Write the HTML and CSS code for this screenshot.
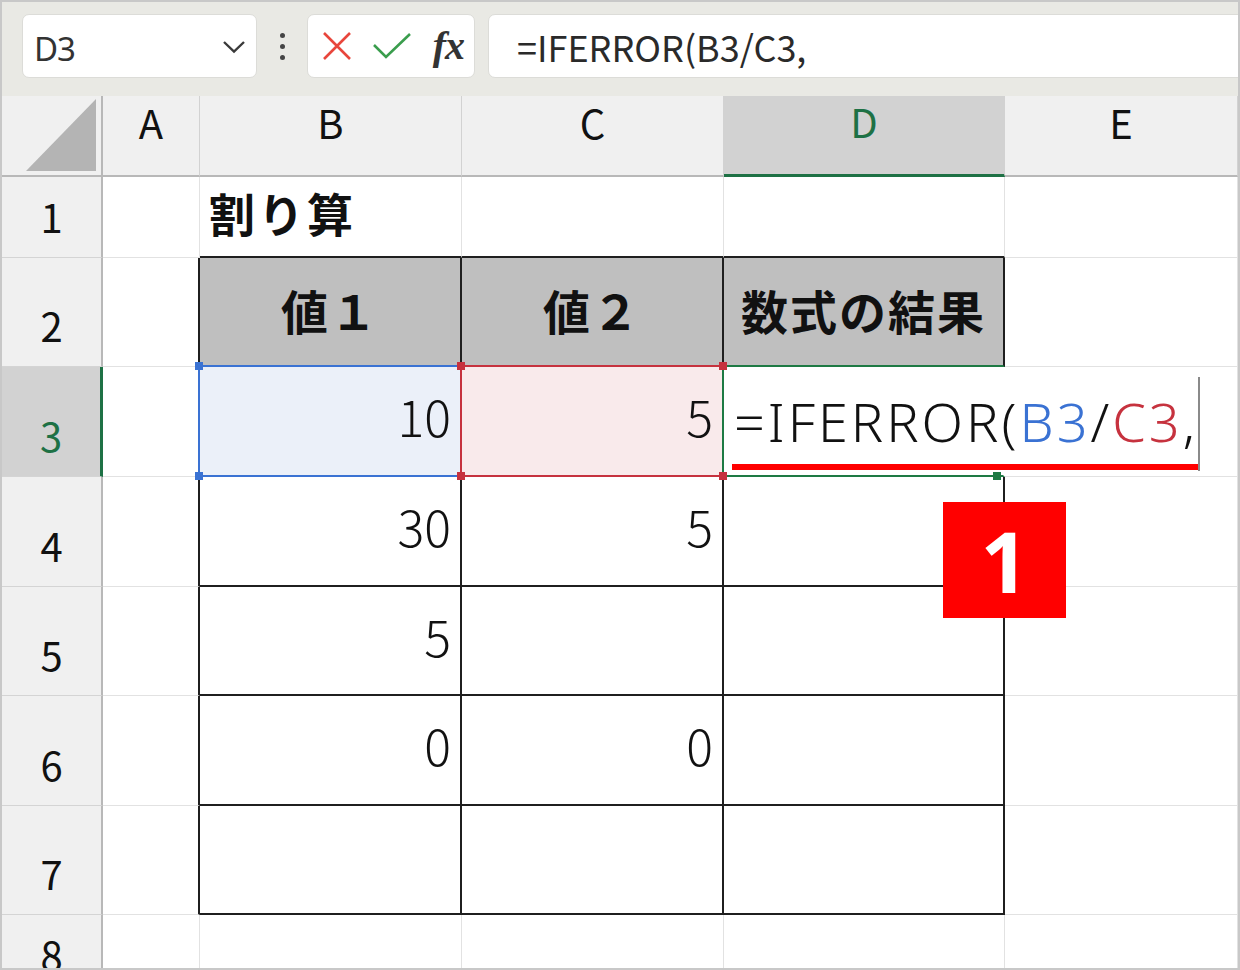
FILE: index.html
```html
<!DOCTYPE html>
<html lang="ja">
<head>
  <meta charset="UTF-8">
  <title>IFERROR 割り算</title>
  <link rel="stylesheet" href="styles.css">
</head>
<body>

  <div class="frame">
    <!-- formula bar -->
    <div class="toolbar">
      <div class="namebox">
        <span class="ref">D3</span>
        <svg class="chev" width="24" height="14" viewBox="0 0 24 14">
          <path d="M2 2 L12 11.5 L22 2" fill="none" stroke="#3a3a3a" stroke-width="2.4"/>
        </svg>
      </div>
      <div class="vdots"><i></i><i></i><i></i></div>
      <div class="fbtns">
        <svg width="30" height="30" viewBox="0 0 30 30">
          <path d="M2 2 L28 28 M28 2 L2 28" stroke="#e8463c" stroke-width="2.6" fill="none"/>
        </svg>
        <svg width="40" height="28" viewBox="0 0 40 28">
          <path d="M2 13 L14 25 L38 2" stroke="#3a9d4d" stroke-width="2.6" fill="none"/>
        </svg>
        <span class="fx">fx</span>
      </div>
      <div class="fbox">=IFERROR(B3/C3,</div>
    </div>

    <!-- sheet -->
    <div class="sheet">
      <div class="hd corner">
        <svg width="72" height="72" viewBox="0 0 72 72"><polygon points="70,0 70,72 0,72" fill="#b4b4b4"/></svg>
      </div>
      <div class="hd">A</div>
      <div class="hd">B</div>
      <div class="hd">C</div>
      <div class="hd hd-sel">D</div>
      <div class="hd">E</div>

      <div class="rh">1</div>
      <div class="c"></div>
      <div class="c tt title">割り算</div>
      <div class="c tt"></div>
      <div class="c tt"></div>
      <div class="c"></div>

      <div class="rh">2</div>
      <div class="c tl"></div>
      <div class="c tb th bb-blue">値１</div>
      <div class="c tb th bb-red">値２</div>
      <div class="c tb th bb-green">数式の結果</div>
      <div class="c"></div>

      <div class="rh rh-sel">3</div>
      <div class="c br-blue"></div>
      <div class="c num ref-b">10
        <span class="hdl blue tl-h"></span>
        <span class="hdl blue bl-h"></span>
      </div>
      <div class="c num ref-c">5
        <span class="hdl red tl-h"></span>
        <span class="hdl red bl-h"></span>
        <span class="hdl red tr-h"></span>
        <span class="hdl red br-h"></span>
      </div>
      <div class="c active">
        <div class="editor">
          <span class="etext">=IFERROR(<span class="k-b">B3</span>/<span class="k-c">C3</span>,</span>
          <div class="uline"></div>
        </div>
        <span class="hdl green fill-h"></span>
      </div>
      <div class="c"></div>

      <div class="rh">4</div>
      <div class="c tl"></div>
      <div class="c tb num">30</div>
      <div class="c tb num">5</div>
      <div class="c tb"></div>
      <div class="c"></div>

      <div class="rh">5</div>
      <div class="c tl"></div>
      <div class="c tb num">5</div>
      <div class="c tb num"></div>
      <div class="c tb"></div>
      <div class="c"></div>

      <div class="rh">6</div>
      <div class="c tl"></div>
      <div class="c tb num">0</div>
      <div class="c tb num">0</div>
      <div class="c tb"></div>
      <div class="c"></div>

      <div class="rh">7</div>
      <div class="c tl"></div>
      <div class="c tb"></div>
      <div class="c tb"></div>
      <div class="c tb"></div>
      <div class="c"></div>

      <div class="rh">8</div>
      <div class="c"></div>
      <div class="c"></div>
      <div class="c"></div>
      <div class="c"></div>
      <div class="c"></div>

      <div class="badge">1</div>
    </div>
  </div>

</body>
</html>
```

FILE: styles.css
```css
* {
  margin: 0;
  padding: 0;
  box-sizing: border-box;
}

body {
  background: #fff;
  font-family: "Noto Sans CJK JP", "Noto Sans", sans-serif;
  color: #111;
}

.frame {
  width: 1240px;
  height: 970px;
  border: 2px solid #c8c8c8;
  overflow: hidden;
  background: #fff;
}

/* formula bar */
.toolbar {
  height: 94px;
  background: #e9e9e4;
  display: flex;
  align-items: flex-start;
  padding: 12px 0 0 20px;
}

.namebox,
.fbtns,
.fbox {
  height: 64px;
  background: #fff;
  border: 1px solid #dcdcd8;
  border-radius: 7px;
  display: flex;
  align-items: center;
}

.namebox {
  width: 235px;
  padding: 0 10px 0 11px;
  justify-content: space-between;
}

.ref {
  font-family: "Noto Sans", sans-serif;
  font-size: 33px;
  color: #333;
  letter-spacing: -1px;
  margin-top: 4px;
}

.chev {
  margin-top: 2px;
}

.vdots {
  width: 50px;
  height: 64px;
  display: flex;
  flex-direction: column;
  align-items: center;
  justify-content: center;
  gap: 6px;
}

.vdots i {
  width: 5px;
  height: 5px;
  border-radius: 50%;
  background: #444;
}

.fbtns {
  width: 168px;
  padding: 0 10px 0 14px;
  justify-content: space-between;
}

.fx {
  font-family: "Liberation Serif", serif;
  font-style: italic;
  font-weight: bold;
  font-size: 40px;
  color: #333;
  letter-spacing: -1px;
  margin-top: -2px;
}

.fbox {
  flex: 1;
  margin-left: 13px;
  margin-right: -12px;
  padding-left: 28px;
  font-size: 36px;
  color: #2a2a2a;
}

/* sheet grid */
.sheet {
  position: relative;
  display: grid;
  grid-template-columns: 101px 97px 262px 262px 281px 1fr;
  grid-template-rows: 81px 81px 109px 110px 110px 109px 110px 109px 81px;
}

.hd {
  background: #f0f0f0;
  border-right: 1px solid #d2d2d2;
  border-bottom: 2px solid #b8b8b8;
  display: flex;
  justify-content: center;
  align-items: center;
  padding-bottom: 28px;
  font-size: 40px;
  color: #111;
}

.corner {
  border-right: 2px solid #b8b8b8;
  align-items: flex-end;
  justify-content: flex-end;
  padding: 0 3px 4px 0;
}

.hd-sel {
  background: #d2d2d2;
  color: #1e7145;
  border-bottom: 3px solid #1e7145;
}

.rh {
  background: #f0f0f0;
  border-right: 2px solid #b8b8b8;
  border-bottom: 1px solid #d4d4d4;
  display: flex;
  justify-content: center;
  align-items: flex-end;
  padding-bottom: 21px;
  font-size: 40px;
  line-height: 1;
}

.rh-sel {
  background: #d2d2d2;
  color: #1e7145;
  border-right: 3px solid #1e7145;
}

.c {
  position: relative;
  border-right: 1px solid #e2e2e2;
  border-bottom: 1px solid #e2e2e2;
  display: flex;
  align-items: center;
  font-size: 50px;
  font-weight: 300;
}

/* table borders */
.tb {
  border-right: 2px solid #1f1f1f;
  border-bottom: 2px solid #1f1f1f;
}

.tl {
  border-right: 2px solid #1f1f1f;
}

.tt {
  border-bottom: 2px solid #1f1f1f;
}

.title {
  font-size: 46px;
  font-weight: bold;
  letter-spacing: 3px;
  padding-left: 9px;
  padding-bottom: 10px;
}

.th {
  background: #bfbfbf;
  justify-content: center;
  font-size: 47px;
  font-weight: bold;
  letter-spacing: 2px;
  padding-bottom: 4px;
}

.num {
  justify-content: flex-end;
  padding-right: 9px;
  padding-bottom: 12px;
}

/* reference highlight */
.bb-blue { border-bottom: 2px solid #3a72d3; }
.bb-red { border-bottom: 2px solid #c6323e; }
.bb-green { border-bottom: 2px solid #1e7a44; }
.br-blue { border-right: 2px solid #3a72d3; }

.ref-b {
  background: #ebf0f9;
  border-bottom: 2px solid #3a72d3;
  border-right: 2px solid #c6323e;
}

.ref-c {
  background: #f9eaeb;
  border-bottom: 2px solid #c6323e;
  border-right: 2px solid #1e7a44;
}

.active {
  border-bottom: 2px solid #1e7a44;
  border-right: 2px solid #fff;
}

.hdl {
  position: absolute;
  width: 8px;
  height: 8px;
  z-index: 3;
}

.hdl.blue { background: #3a72d3; }
.hdl.red { background: #c6323e; }
.hdl.green { background: #1e7a44; }

.tl-h { left: -5px; top: -5px; }
.bl-h { left: -5px; bottom: -5px; }
.tr-h { right: -5px; top: -5px; }
.br-h { right: -5px; bottom: -5px; }
.fill-h { right: 2px; bottom: -5px; }

/* in-cell editor spilling into E3 */
.editor {
  position: absolute;
  left: 0;
  top: 10px;
  width: 476px;
  height: 94px;
  background: #fff;
  border-right: 2px solid #8a8a8a;
  z-index: 2;
  display: flex;
  flex-direction: column;
  padding-top: 12px;
}

.etext {
  font-family: "Noto Sans", sans-serif;
  font-size: 54px;
  font-weight: 300;
  letter-spacing: 3px;
  line-height: 64px;
  padding-left: 10px;
  color: #111;
  white-space: nowrap;
}

.k-b { color: #3a72d3; }
.k-c { color: #c6323e; }

.uline {
  margin: auto 0 1px 8px;
  height: 6px;
  background: #ff0000;
}

.badge {
  position: absolute;
  left: 941px;
  top: 406px;
  width: 123px;
  height: 116px;
  background: #ff0000;
  color: #fff;
  font-family: "Noto Sans", sans-serif;
  font-weight: bold;
  font-size: 84px;
  display: flex;
  justify-content: center;
  align-items: center;
  z-index: 4;
}
```
